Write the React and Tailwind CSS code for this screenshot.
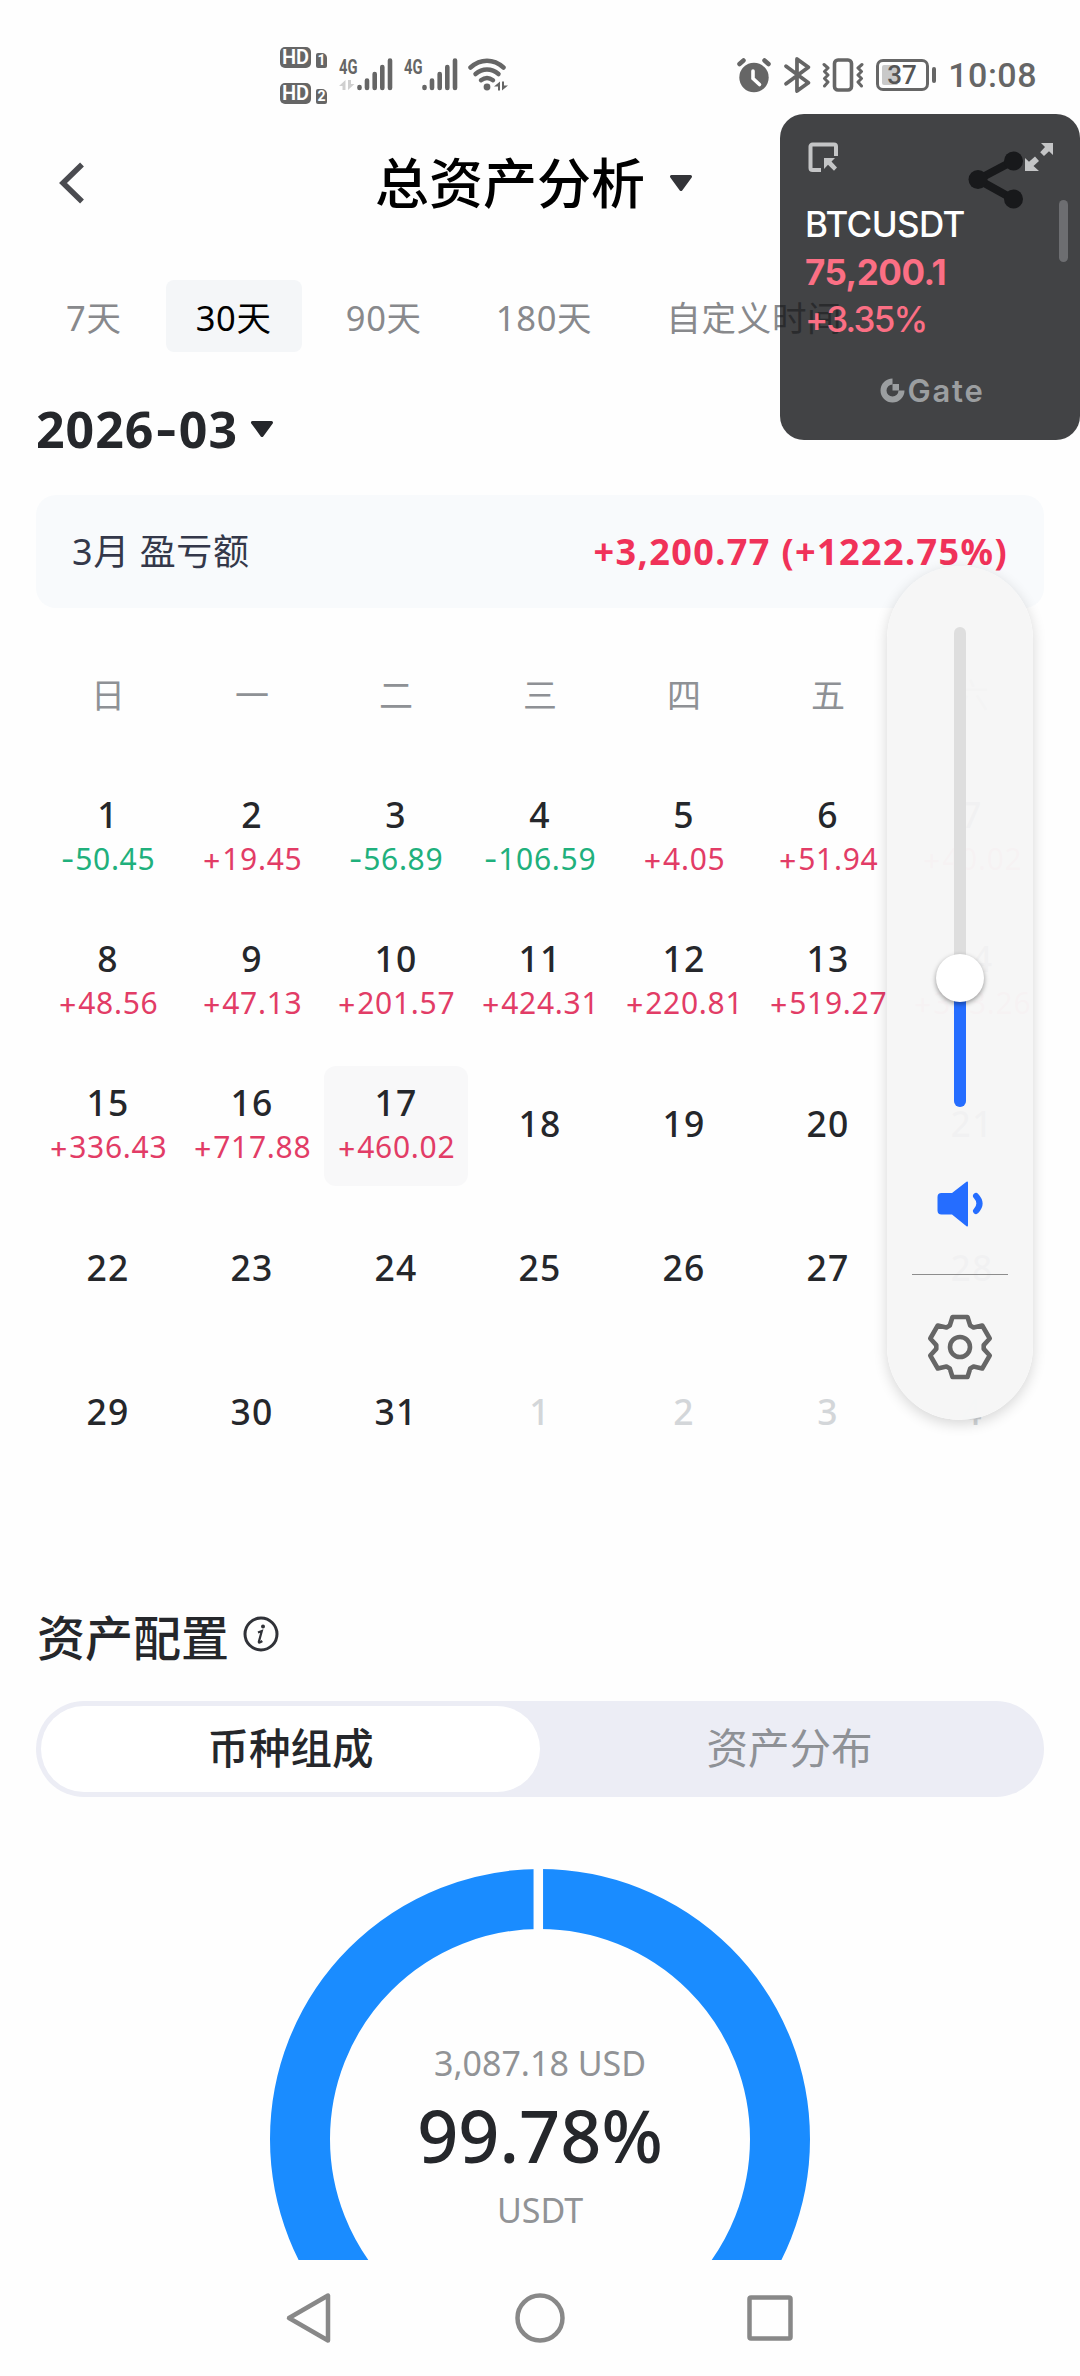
// Asset analysis page — monthly PnL calendar and allocation chart
import React, { useState } from 'react';
import clsx from 'clsx';

const RANGES = ['7天', '30天', '90天', '180天', '自定义时间'];
const WEEKDAYS = ['日', '一', '二', '三', '四', '五', '六'];

const PNL = {
    1: '-50.45',
    2: '+19.45',
    3: '-56.89',
    4: '-106.59',
    5: '+4.05',
    6: '+51.94',
    7: '+40.02',
    8: '+48.56',
    9: '+47.13',
    10: '+201.57',
    11: '+424.31',
    12: '+220.81',
    13: '+519.27',
    14: '+323.26',
    15: '+336.43',
    16: '+717.88',
    17: '+460.02',
};

// 31 days of March followed by the first days of April
const DAYS = Array.from({ length: 35 }, (_, i) => ({
    day: i < 31 ? i + 1 : i - 30,
    outside: i >= 31,
    pnl: i < 31 ? PNL[i + 1] : undefined,
}));

const Caret = ({ className }) => (
    <svg className={className} width="24" height="18" viewBox="0 0 24 18">
        <path d="M2.5 2.5h19L12 15.500z" fill="currentColor" stroke="currentColor" strokeWidth="3" strokeLinejoin="round" />
    </svg>
);

const HdBadge = ({ sim }) => (
    <div className="flex items-end gap-[5px]">
        <span className="flex h-[21px] w-[31px] items-center justify-center rounded-[5px] bg-[#666] font-['Roboto',sans-serif] text-[20px] leading-none font-semibold text-white">
            HD
        </span>
        <span className="flex h-[15px] w-[11px] items-center justify-center rounded-[2px] rounded-tr-[5px] bg-[#666] font-['Roboto',sans-serif] text-[14px] leading-none font-bold text-white">
            {sim}
        </span>
    </div>
);

const Signal = ({ active }) => (
    <svg width="54" height="36" viewBox="0 0 54 36" className="overflow-visible text-[#666]">
        <text x="0" y="16.500" fontSize="20.500" fontWeight="700" fill="currentColor" textLength="18.500" lengthAdjust="spacingAndGlyphs" className="font-['Roboto',sans-serif]">
            4G
        </text>
        {active && (
            <g fill="#cfcfcf">
                <path d="M6.500 23v10H3.500v-4H0z" />
                <path d="M9 33V23h3v4h3.500z" />
            </g>
        )}
        <g stroke="currentColor" strokeWidth="4.600" strokeLinecap="round">
            <path d="M20.500 30v1M28 23.500v7.500M35.700 17v14M43.300 10v21M51 3.500v27.500" />
        </g>
    </svg>
);

const Wifi = () => (
    <svg width="40" height="36" viewBox="0 0 40 36" fill="none" stroke="#666" strokeWidth="4.500" strokeLinecap="round">
        <path d="M2.500 10.500c10-9 23-9 33 0" />
        <path d="M7.500 17c7-6 16-6 23 0" />
        <path d="M13 23.200c4-3 8-3 12 0" />
        <circle cx="19" cy="30" r="3.400" fill="#666" stroke="none" />
        <path d="M32 24.500v9h-2v-4h-4zM34 33.500v-9h2v4h4z" fill="#666" stroke="none" />
    </svg>
);

const StatusBar = () => (
    <div className="flex h-[150px] items-center pr-[43px] pl-[280px] text-[#666]">
        <div className="flex flex-col gap-[15px]">
            <HdBadge sim="1" />
            <HdBadge sim="2" />
        </div>
        <div className="ml-3 flex gap-[11px]">
            <Signal active />
            <Signal />
        </div>
        <div className="ml-[10px]">
            <Wifi />
        </div>
        <div className="ml-auto flex items-center">
            <svg width="34" height="36" viewBox="0 0 34 36" fill="none" stroke="#666" strokeWidth="4.500" strokeLinecap="round">
                <path d="M2.500 7l4-3.500M31.500 7l-4-3.500" />
                <circle cx="17" cy="20.500" r="14.700" fill="#666" stroke="none" />
                <path d="M16 14v7.500l6.500 6" stroke="#fff" strokeWidth="3.600" />
            </svg>
            <svg className="ml-[13px]" width="27" height="38" viewBox="0 0 26 36" fill="none" stroke="#666" strokeWidth="3.600" strokeLinecap="round" strokeLinejoin="round">
                <path d="M2 9.500L23.500 25.500L12.500 33.500V2.500L23.500 10.500L2 26.500" />
            </svg>
            <svg className="ml-[11px]" width="42" height="36" viewBox="0 0 42 36" fill="none" stroke="#666" strokeLinecap="round" strokeLinejoin="round">
                <rect x="12.500" y="3" width="17" height="30" rx="3.500" strokeWidth="3.600" />
                <path d="M2 7.500l4 3.500-3.500 3.500 3.500 3.500-3.500 3.500 3.500 3.500-3.500 4" strokeWidth="3" />
                <path d="M40 7.500L36 11l3.500 3.500L36 18l3.500 3.500L36 25l3.500 4" strokeWidth="3" />
            </svg>
            <div className="ml-[12px] flex items-center gap-[3px]">
                <div className="flex h-[32px] w-[53px] items-center rounded-[7px] border-[3px] border-[#666] p-[3px]">
                    <div className="flex h-full w-[16px] items-center rounded-[2px] bg-[#c9c9c9]">
                        <span className="ml-[5px] font-['Roboto',sans-serif] text-[26px] leading-none font-medium text-[#555]">37</span>
                    </div>
                </div>
                <div className="h-[16px] w-[4px] rounded-full bg-[#666]" />
            </div>
            <span className="ml-[12px] font-['Roboto',sans-serif] text-[34px] leading-none font-medium tracking-[0.5px]">10:08</span>
        </div>
    </div>
);

const DayCell = ({ day, outside, pnl, selected }) => (
    <div
        className={clsx(
            'flex h-[120px] flex-col items-center rounded-xl',
            pnl ? 'pt-3' : 'pt-[33px]',
            selected && 'bg-[#f8f8f9]'
        )}
    >
        <span
            className={clsx(
                'text-[35.5px] leading-[48px] font-medium tracking-[1.3px]',
                outside ? 'text-[#d3d6d9]' : 'text-[#25272b]'
            )}
        >
            {day}
        </span>
        {pnl && (
            <span
                className={clsx(
                    'mt-px text-[30px] leading-[40px] tracking-[0.7px]',
                    pnl.startsWith('-') ? 'text-[#20b07c]' : 'text-[#e23c66]'
                )}
            >
                <span className="font-['Inter',sans-serif]">{pnl[0]}</span>
                {pnl.slice(1)}
            </span>
        )}
    </div>
);

// Floating price ticker drawn over the page
const TickerWidget = () => (
    <div className="absolute top-[114px] left-[780px] h-[326px] w-[300px] rounded-[24px] bg-[rgba(18,19,21,0.795)] px-[25px] pt-[27px] font-['Inter',sans-serif]">
        <div className="flex items-center justify-between pr-[2px] pl-[2px]">
            <svg width="32" height="32" viewBox="0 0 32 32" fill="none" stroke="#c4c5c6" strokeWidth="4">
                <path d="M14 29H5.500a2 2 0 0 1-2-2V5.500a2 2 0 0 1 2-2H27a2 2 0 0 1 2 2V15" />
                <path d="M17 17h11l-3.500 3.500L30 26.500 27 29.700l-6-6L17 28z" fill="#c4c5c6" stroke="none" />
            </svg>
            <svg width="28" height="28" viewBox="0 0 28 28" fill="#c4c5c6">
                <path d="M16 0h12v12l-4-3.800-5 4.800-3.800-3.800L20 4z" />
                <path d="M0 15l4 3.800 6-5.300 4 4.500-5.500 5L14 28H0z" />
            </svg>
        </div>
        <p className="mt-[28px] text-[35px] leading-[47.5px] font-medium tracking-[-0.6px] text-white">BTCUSDT</p>
        <p className="text-[35px] leading-[47.5px] font-bold tracking-[-0.5px] text-[#fb6f84]">75,200.1</p>
        <p className="text-[35px] leading-[47.5px] font-medium tracking-[-1.8px] text-[#fb6f84]">+3.35%</p>
        <div className="mt-[32px] flex items-center justify-center gap-[2px] pl-[5px] text-[#9b9ea0]">
            <svg width="25" height="25" viewBox="0 0 25 25">
                <path d="M12.500 3.500a9 9 0 1 0 9 9" fill="none" stroke="currentColor" strokeWidth="6" />
                <path d="M12.500 6h6.500v6.500h-6.500z" fill="currentColor" />
            </svg>
            <span className="text-[31px] leading-[30px] font-semibold tracking-[1.8px]">Gate</span>
        </div>
        <div className="absolute top-[86px] right-[12px] h-[62px] w-[9px] rounded-full bg-[#6d6e71]" />
    </div>
);

const TOOTH = [[-10.2, -21.500], [-7.5, -30], [7.5, -30], [10.2, -21.5]];

const gearPoints = [0, 1, 2, 3, 4, 5]
    .flatMap((k) => {
        const a = (k * Math.PI) / 3;
        return TOOTH.map(([x, y]) => {
            const px = x * Math.cos(a) - y * Math.sin(a);
            const py = x * Math.sin(a) + y * Math.cos(a);
            return `${px.toFixed(2)},${py.toFixed(2)}`;
        });
    })
    .join(' ');

// System volume slider drawn over the page
const VolumePanel = ({ level }) => (
    <div className="absolute top-[566px] left-[887px] flex h-[854px] w-[146px] flex-col items-center rounded-full bg-[rgba(246,246,246,0.98)] pt-[61px] shadow-[0_4px_14px_rgba(0,0,0,0.16)]">
        <div className="relative flex h-[480px] w-[12px] flex-col justify-end rounded-full bg-[#dedede]">
            <div className="w-full rounded-b-full bg-[#256dff]" style={{ height: `${level}%` }} />
            <div
                className="absolute left-1/2 h-[48px] w-[48px] -translate-x-1/2 translate-y-1/2 rounded-full bg-white shadow-[0_2px_5px_rgba(0,0,0,0.4)]"
                style={{ bottom: `${level}%` }}
            />
        </div>
        <svg className="mt-[74px]" width="46" height="46" viewBox="0 0 46 46">
            <path d="M3 12h12L29.500 0.800q1.500-.8 1.500 1v42.400q0 1.800-1.500 1L15 33.500H4.500q-4 0-4-4v-13.500q0-4 4-4z" fill="#256dff" />
            <path d="M39 15q7 7.500 0 15" fill="none" stroke="#256dff" strokeWidth="6" strokeLinecap="round" />
        </svg>
        <div className="mt-[47px] h-px w-[96px] bg-[#8d8d8d]" />
        <svg className="mt-[38px]" width="68" height="68" viewBox="-34 -34 68 68" fill="none" stroke="#666" strokeWidth="4.600" strokeLinejoin="round">
            <polygon points={gearPoints} />
            <circle r="10" />
        </svg>
    </div>
);

const NavBar = () => (
    <div className="flex h-[116px] items-center justify-center gap-[181px]">
        <svg width="50" height="52" viewBox="0 0 50 52" fill="none" stroke="#888" strokeWidth="4.500" strokeLinejoin="round">
            <path d="M44 3.500v45L5 26z" />
        </svg>
        <svg width="50" height="52" viewBox="0 0 50 52" fill="none" stroke="#888" strokeWidth="4.500">
            <circle cx="25" cy="26" r="22.500" />
        </svg>
        <svg width="50" height="52" viewBox="0 0 50 52" fill="none" stroke="#888" strokeWidth="4.500">
            <rect x="3.500" y="5.500" width="41" height="41" rx="1.500" />
        </svg>
    </div>
);

const App = () => {
    const [range, setRange] = useState('30天');
    const [tab, setTab] = useState('币种组成');

    return (
        <div className="relative h-[2376px] w-[1080px] overflow-hidden bg-[#fefefe] font-['Noto_Sans','Noto_Sans_CJK_SC',sans-serif] text-[#25272b]">
            <StatusBar />

            <header className="flex h-[66px] items-center pl-[58px]">
                <svg width="28" height="42" viewBox="0 0 28 42" fill="none" stroke="#4a4b50" strokeWidth="5.500">
                    <path d="M24 2.500L5 21l19 18.500" />
                </svg>
                <h1 className="ml-[289px] text-[54px] leading-[66px] font-medium text-black">总资产分析</h1>
                <Caret className="ml-[24px] text-[#333438]" />
            </header>

            <div className="mt-[64px] flex gap-[14px] pl-[36px]">
                {RANGES.map((item) => (
                    <button
                        key={item}
                        onClick={() => setRange(item)}
                        className={clsx(
                            'h-[72px] shrink-0 rounded-lg px-[30px] pt-[3px] text-[34.5px] tracking-[0.7px] whitespace-nowrap',
                            item === range ? 'bg-[#f4f6f8] text-black' : 'text-[#88898c]'
                        )}
                    >
                        {item}
                    </button>
                ))}
            </div>

            <div className="mt-[47px] flex h-[60px] items-center pl-[36px]">
                <span className="text-[50px] leading-none font-bold tracking-[1px]">
                    2026<span className="font-['Inter',sans-serif]">-</span>03
                </span>
                <Caret className="ml-[12px] text-[#25272b]" />
            </div>

            <div className="mx-[36px] mt-[36px] flex h-[113px] items-center justify-between rounded-[20px] bg-[#f8fafc] px-[36px]">
                <span className="text-[36px] tracking-[0.6px] text-[#34384a]">3月 盈亏额</span>
                <span className="text-[36px] font-bold tracking-[1.4px] text-[#f03259]">+3,200.77 (+1222.75%)</span>
            </div>

            <div className="mx-[36px] mt-[67px] grid grid-cols-7 text-center text-[34px] leading-[40px] text-[#8e9195]">
                {WEEKDAYS.map((d) => (
                    <span key={d}>{d}</span>
                ))}
            </div>

            <div className="mx-[36px] mt-[63px] grid grid-cols-7 gap-y-6">
                {DAYS.map((d, i) => (
                    <DayCell key={i} {...d} selected={i === 16} />
                ))}
            </div>

            <div className="mt-[134px] flex h-[60px] items-center pl-[37px]">
                <h2 className="text-[48px] leading-[60px] font-medium">资产配置</h2>
                <svg className="mb-2 ml-[14px]" width="36" height="36" viewBox="0 0 36 36" fill="none" stroke="#303238" strokeWidth="3">
                    <circle cx="18" cy="18" r="16" />
                    <circle cx="20" cy="10.500" r="2" fill="#303238" stroke="none" />
                    <path d="M15 16.500l3.800-1.500-3 11q0 1.500 3.500-1" strokeWidth="2.200" />
                </svg>
            </div>

            <div className="mx-[36px] mt-[33px] flex h-[96px] rounded-full bg-[#ecedf5] p-[5px]">
                {['币种组成', '资产分布'].map((item) => (
                    <button
                        key={item}
                        onClick={() => setTab(item)}
                        className={clsx(
                            'flex-1 rounded-full text-[41.5px] leading-none',
                            item === tab ? 'bg-white font-medium' : 'text-[#8e9196]'
                        )}
                    >
                        {item}
                    </button>
                ))}
            </div>

            <div className="mt-[72px] grid h-[391px] justify-center overflow-hidden">
                <svg className="col-start-1 row-start-1" width="540" height="540" viewBox="0 0 540 540">
                    <circle cx="270" cy="270" r="240" fill="none" stroke="#1a8cff" strokeWidth="60" />
                    <path d="M268.300 0v64" stroke="#fefefe" strokeWidth="9.500" />
                </svg>
                <div className="col-start-1 row-start-1 flex flex-col items-center pt-[170px] text-[#919396]">
                    <span className="text-[34px] leading-[48px]">3,087.18 USD</span>
                    <span className="mt-[8px] text-[72px] leading-[80px] font-medium text-[#25272b]">99.78%</span>
                    <span className="mt-[11px] text-[34px] leading-[48px]">USDT</span>
                </div>
            </div>

            <NavBar />

            <TickerWidget />
            <svg className="absolute top-[148px] left-[966px]" width="60" height="64" viewBox="0 0 60 64" fill="#18191b" stroke="#18191b" strokeWidth="8">
                <path d="M47 13L12 31.500L47 51" fill="none" />
                <circle cx="12" cy="31.500" r="9.500" stroke="none" />
                <circle cx="47.500" cy="13" r="9.500" stroke="none" />
                <circle cx="47.500" cy="51" r="9.500" stroke="none" />
            </svg>
            <VolumePanel level={26.8} />
        </div>
    );
};

export default App;
